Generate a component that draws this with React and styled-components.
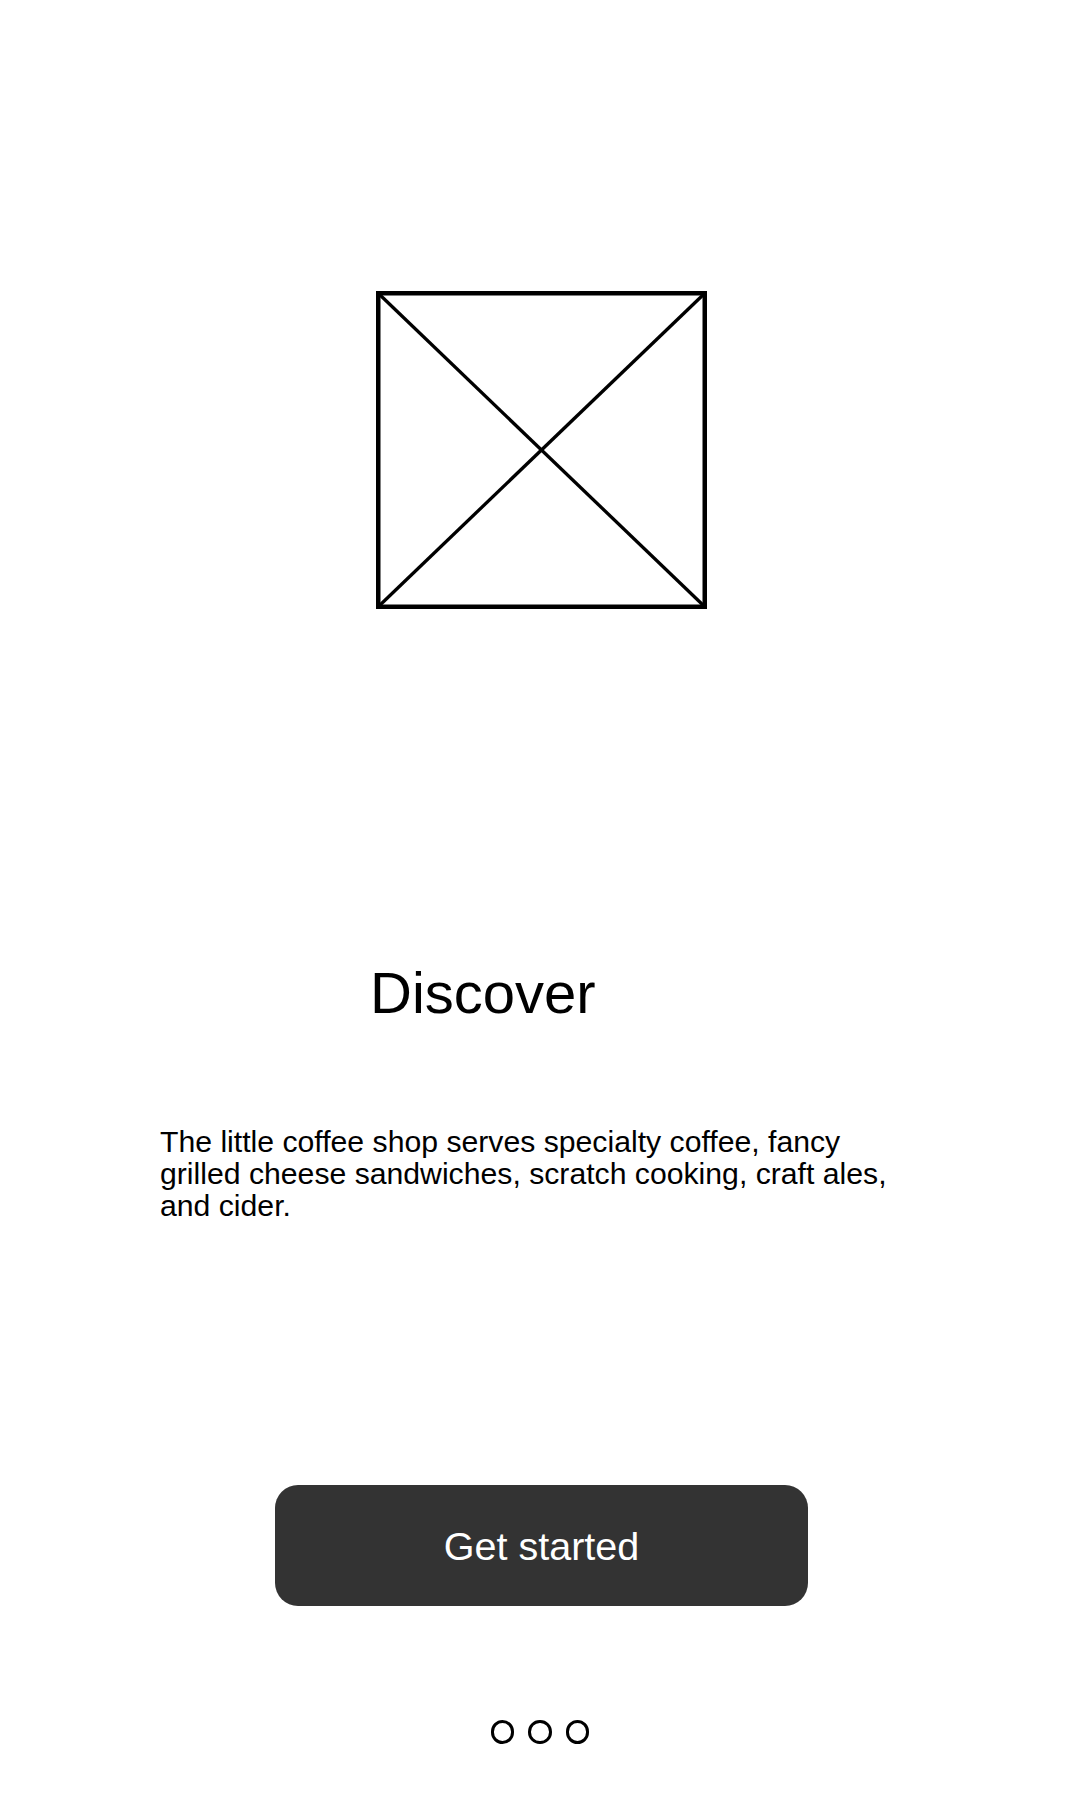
import React from "react";
import styled, { createGlobalStyle } from "styled-components";

const GlobalStyle = createGlobalStyle`
  html, body {
    margin: 0;
    padding: 0;
    background: #ffffff;
  }
  body {
    font-family: "Liberation Sans", Arial, sans-serif;
    color: #000000;
  }
`;

const Screen = styled.main`
  width: 1080px;
  height: 1800px;
  box-sizing: border-box;
  padding-top: 291px;
  display: flex;
  flex-direction: column;
  align-items: flex-start;
  background: #ffffff;
  overflow: hidden;
`;

const Placeholder = styled.svg`
  display: block;
  margin-left: 376px;
  width: 331px;
  height: 318px;
`;

const Title = styled.h1`
  margin: 355px 0 0 370px;
  font-family: "Liberation Sans", Arial, sans-serif;
  font-weight: 400;
  font-size: 58px;
  line-height: 58px;
  color: #000000;
`;

const Body = styled.p`
  box-sizing: border-box;
  width: 1080px;
  margin: 104px 0 0 0;
  padding: 0 158px 0 160px;
  font-family: "Liberation Sans", Arial, sans-serif;
  font-size: 30.2px;
  line-height: 32px;
  color: #000000;
`;

const PrimaryButton = styled.button`
  margin: 263px 0 0 275px;
  width: 533px;
  height: 121px;
  border: none;
  border-radius: 23px;
  background: #333333;
  color: #ffffff;
  font-family: "Liberation Sans", Arial, sans-serif;
  font-size: 39.5px;
  display: flex;
  align-items: center;
  justify-content: center;
  padding: 1px 0 0 0;
  cursor: pointer;
`;

const Pager = styled.div`
  align-self: center;
  margin-top: 114px;
  display: flex;
  gap: 14px;
`;

const Dot = styled.span`
  display: block;
  width: 23.5px;
  height: 23.5px;
  box-sizing: border-box;
  border: 3px solid #000000;
  border-radius: 50%;
  background: ${(p) => (p.$active ? "#000000" : "transparent")};
`;

export default function App() {
  return (
    <>
      <GlobalStyle />
      <Screen>
        <Placeholder viewBox="0 0 331 318" aria-hidden="true">
          <rect x="2.25" y="2.25" width="326.5" height="313.5" fill="none" stroke="#000" strokeWidth="4.5" />
          <line x1="3" y1="3" x2="328" y2="315" stroke="#000" strokeWidth="3.3" />
          <line x1="328" y1="3" x2="3" y2="315" stroke="#000" strokeWidth="3.3" />
        </Placeholder>
        <Title>Discover</Title>
        <Body>
          The little coffee shop serves specialty coffee, fancy grilled cheese
          sandwiches, scratch cooking, craft ales, and cider.
        </Body>
        <PrimaryButton type="button">Get started</PrimaryButton>
        <Pager>
          <Dot />
          <Dot />
          <Dot />
        </Pager>
      </Screen>
    </>
  );
}
